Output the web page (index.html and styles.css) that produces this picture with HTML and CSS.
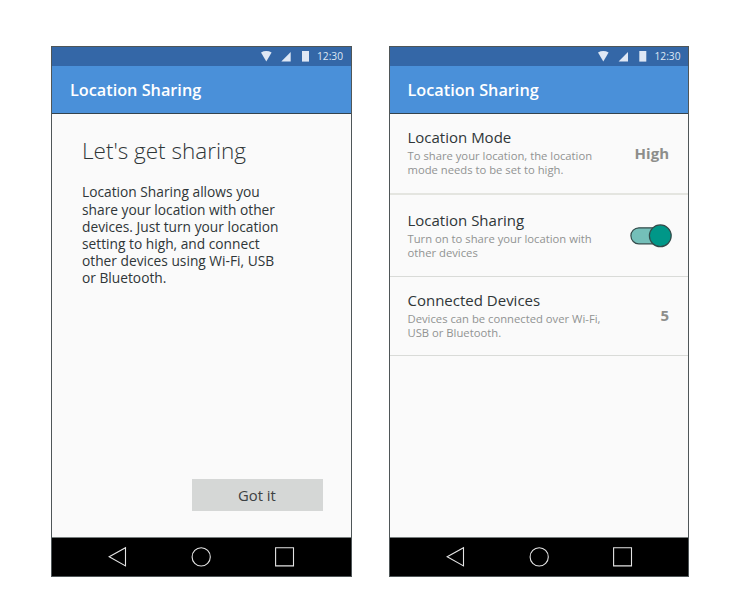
FILE: index.html
```html
<!DOCTYPE html>
<html lang="en">
<head>
<meta charset="utf-8">
<title>Location Sharing</title>
<link rel="stylesheet" href="styles.css">
</head>
<body>
<main class="screens">
  <section class="phone">
    <div class="status">
      <svg class="status-icons" width="50" height="12" viewBox="0 0 50 12"><path d="M0 1.4Q5.3-1.4 10.6 1.4L5.3 10.4z"/><path d="M20.3 10.4L29.7 1V10.4z"/><path d="M41 0H48V10.6H41z"/></svg>
      <span class="time">12:30</span>
    </div>
    <header class="appbar"><h1>Location Sharing</h1></header>
    <div class="content intro">
      <h2>Let's get sharing</h2>
      <p>Location Sharing allows you<br>share your location with other<br>devices. Just turn your location<br>setting to high, and connect<br>other devices using Wi-Fi, USB<br>or Bluetooth.</p>
      <button class="confirm">Got it</button>
    </div>
    <svg class="nav" width="298" height="38" viewBox="0 0 298 38" preserveAspectRatio="xMinYMin"><path d="M57.2 18.8L73.5 9.8V27.9z"/><circle cx="149.2" cy="18.9" r="9.1"/><path d="M223.6 9.8H241.5V27.9H223.6z"/></svg>
  </section>
  <section class="phone">
    <div class="status">
      <svg class="status-icons" width="50" height="12" viewBox="0 0 50 12"><path d="M0 1.4Q5.3-1.4 10.6 1.4L5.3 10.4z"/><path d="M20.6 10.4L30 1V10.4z"/><path d="M41.3 0H48.3V10.6H41.3z"/></svg>
      <span class="time">12:30</span>
    </div>
    <header class="appbar"><h1>Location Sharing</h1></header>
    <div class="content settings">
      <div class="row mode">
        <div><h3>Location Mode</h3><p>To share your location, the location<br>mode needs to be set to high.</p></div>
        <strong>High</strong>
      </div>
      <div class="row sharing">
        <div><h3>Location Sharing</h3><p>Turn on to share your location with<br>other devices</p></div>
        <svg class="switch" width="42" height="24" viewBox="0 0 42 24"><rect x=".9" y="3.8" width="34" height="16" rx="8" fill="#74bfb9"/><circle cx="30.3" cy="11.8" r="10.9" fill="#009788"/></svg>
      </div>
      <div class="row devices">
        <div><h3>Connected Devices</h3><p>Devices can be connected over Wi-Fi,<br>USB or Bluetooth.</p></div>
        <strong>5</strong>
      </div>
    </div>
    <svg class="nav" width="298" height="38" viewBox="0 0 298 38" preserveAspectRatio="xMinYMin"><path d="M57.2 18.8L73.5 9.8V27.9z"/><circle cx="149.2" cy="18.9" r="9.1"/><path d="M223.6 9.8H241.5V27.9H223.6z"/></svg>
  </section>
</main>
</body>
</html>
```
FILE: styles.css
```css
* { box-sizing: border-box; }
body {
  margin: 0;
  background: #fff;
  font-family: "Open Sans", "Noto Sans", sans-serif;
  color: #2f3638;
}
h1, h2, h3, p { margin: 0; white-space: nowrap; }
.screens {
  display: flex;
  gap: 37px;
  padding: 46px 0 0 51px;
}
.phone {
  display: flex;
  flex-direction: column;
  width: 300.5px;
  height: 531px;
  border: 1px solid #4f5658;
  background: #fafafa;
}
.status {
  display: flex;
  flex: 0 0 19px;
  align-items: center;
  justify-content: flex-end;
  gap: 4.5px;
  padding-right: 7.5px;
  background: #3467a7;
  color: #dfe8f5;
}
.status-icons { fill: #dfe8f5; }
.time {
  width: 28px;
  font-size: 10.2px;
  line-height: 19px;
  text-align: right;
}
.appbar {
  flex: 0 0 48px;
  min-height: 0;
  padding: 1px 0 0 18px;
  border-bottom: 1px solid #34434e;
  background: #4a90d9;
}
.appbar h1 {
  color: #fff;
  font-size: 16.25px;
  font-weight: 600;
  line-height: 46px;
}
.content {
  display: flex;
  flex: 1;
  flex-direction: column;
  border-bottom: 1px solid #777d7d;
}
.intro { padding: 20px 28px 26px 30px; }
.intro h2 {
  font-size: 22.5px;
  font-weight: 300;
  line-height: 33px;
}
.intro p {
  margin-top: 16.4px;
  font-size: 13.75px;
  line-height: 17.2px;
}
.confirm {
  align-self: flex-end;
  width: 131px;
  height: 32px;
  margin-top: auto;
  padding: 0;
  border: 0;
  background: #d5d7d6;
  color: #3d4143;
  font: 14.8px/33px "Open Sans", "Noto Sans", sans-serif;
}
.row {
  display: flex;
  justify-content: space-between;
  padding: 12px 19px 0 18px;
  border-bottom: 1px solid #d9dbd8;
}
.row h3 {
  margin-bottom: 1px;
  font-size: 15px;
  font-weight: 400;
  line-height: 22px;
}
.row p {
  color: #919392;
  font-size: 11.25px;
  line-height: 14px;
}
.row strong {
  margin-top: 16px;
  color: #8d8e8b;
  font-size: 15px;
  line-height: 22px;
}
.mode { height: 81px; border-bottom: 2px solid #e4e5e0; }
.sharing { height: 82px; padding: 14px 16.5px 0 18px; }
.devices { height: 79px; }
.devices strong { margin-top: 15px; }
.switch { margin-top: 15px; stroke: #334b4a; stroke-width: 1.2; }
.nav {
  flex: 0 0 38px;
  width: 100%;
  background: #000;
  fill: none;
  stroke: #e4e4e4;
  stroke-width: 1.1;
}
```
